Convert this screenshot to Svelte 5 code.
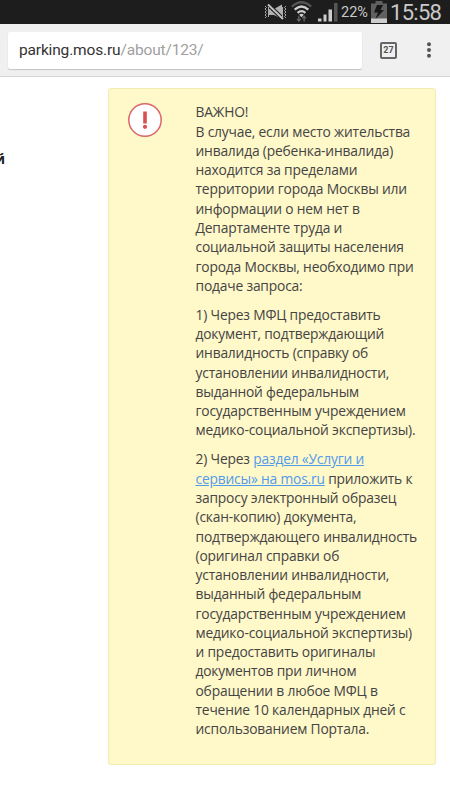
<script lang="ts">
	const clock = "15:58";
	const battery = 22;
	const tabCount = 27;
	const host = "parking.mos.ru";
	const path = "/about/123/";
</script>

<div class="screen">
	<header class="status-bar">
		<svg class="mute" viewBox="0 0 23 18" width="23" height="18">
			<path d="M5 6h5l8-4.500V16l-8-4H5z" fill="#b0b0b0" />
			<path d="M4 1.500l15 14.500" stroke="#1d1d1d" stroke-width="4" />
			<path d="M4 1.500l15 14.500" stroke="#c4c4c4" stroke-width="1.800" />
			<path
				d="M1 3l1.500 1.500L1 6l1.500 1.500L1 9l1.500 1.500L1 12l1.500 1.500L1 15M4.500 4v10M18.500 4v10M22 3l-1.500 1.500L22 6l-1.500 1.500L22 9l-1.500 1.500L22 12l-1.500 1.500L22 15"
				fill="none"
				stroke="#aaa"
				stroke-width="1"
			/>
		</svg>
		<svg class="wifi" viewBox="0 0 20 20" width="21" height="21">
			<path d="M.8 5.300Q10-3 19.200 5.300" fill="none" stroke="#555" stroke-width="2.200" />
			<path d="M3.500 8.300Q10 2.300 16.500 8.300M6.300 11.300Q10 8 13.700 11.300" fill="none" stroke="#cfcfcf" stroke-width="2.200" />
			<path d="M7.800 13Q10 11.300 12.200 13L10 15.500z" fill="#cfcfcf" />
			<path d="M7.500 14v5M5.700 17l1.800 2 1.800-2M12.500 19.500v-5M10.700 16.500l1.800-2 1.800 2" fill="none" stroke="#686868" stroke-width="1.200" />
		</svg>
		<svg class="signal" viewBox="0 0 21 20" width="21" height="20">
			<path d="M0 16.500h3.500V19.500H0zM5.500 12.500h3v7h-3zM10.500 7.500H14v12h-3.500z" fill="#cdcdcd" />
			<path d="M16 1h3.500v18.500H16z" fill="#565656" />
		</svg>
		<span class="percent">{battery}%</span>
		<svg class="battery" viewBox="0 0 16 22" width="16" height="22">
			<path d="M4.500 0h7v2.500H16V22H0V2.500h4.500z" fill="#606060" />
			<path d="M0 17.500h16V22H0z" fill="#cecece" />
			<path d="M6 4h6L9.500 9H13L4.500 18 7 11.500H3z" fill="#171717" />
		</svg>
		<span class="clock">{clock}</span>
	</header>

	<nav class="toolbar">
		<div class="address">{host}<span>{path}</span></div>
		<div class="tabs">{tabCount}</div>
		<svg class="menu" viewBox="0 0 6 16" width="6" height="16">
			<circle cx="3" cy="2.300" r="2" />
			<circle cx="3" cy="8" r="2" />
			<circle cx="3" cy="13.700" r="2" />
		</svg>
	</nav>

	<main>
		<aside><b>й</b></aside>
		<section class="notice">
			<svg class="alert" viewBox="0 0 34 34" width="34" height="34">
				<circle cx="17" cy="17" r="16.200" fill="#fff" stroke="#db6669" stroke-width="1.500" />
				<path d="M15.200 8.500h3.600v12h-3.600z" fill="#d94f52" />
				<circle cx="17" cy="23.800" r="2.100" fill="#d94f52" />
			</svg>
			<div class="text">
				<p>
					ВАЖНО!<br />
					В случае, если место жительства<br />
					инвалида (ребенка-инвалида)<br />
					находится за пределами<br />
					территории города Москвы или<br />
					информации о нем нет в<br />
					Департаменте труда и<br />
					социальной защиты населения<br />
					города Москвы, необходимо при<br />
					подаче запроса:
				</p>
				<p>
					1) Через МФЦ предоставить<br />
					документ, подтверждающий<br />
					инвалидность (справку об<br />
					установлении инвалидности,<br />
					выданной федеральным<br />
					государственным учреждением<br />
					медико-социальной экспертизы).
				</p>
				<p>
					2) Через <a href="#services">раздел «Услуги и<br />
					сервисы» на mos.ru</a> приложить к<br />
					запросу электронный образец<br />
					(скан-копию) документа,<br />
					подтверждающего инвалидность<br />
					(оригинал справки об<br />
					установлении инвалидности,<br />
					выданный федеральным<br />
					государственным учреждением<br />
					медико-социальной экспертизы)<br />
					и предоставить оригиналы<br />
					документов при личном<br />
					обращении в любое МФЦ в<br />
					течение 10 календарных дней с<br />
					использованием Портала.
				</p>
			</div>
		</section>
	</main>
</div>

<style>
	:global(body) {
		background: #fff;
	}
	.screen {
		width: 450px;
		height: 800px;
		overflow: hidden;
		display: flex;
		flex-direction: column;
		font-family: "Open Sans", "Noto Sans", sans-serif;
	}
	.status-bar {
		height: 24px;
		flex-shrink: 0;
		box-sizing: border-box;
		padding: 0 8px 1px 0;
		display: flex;
		align-items: center;
		justify-content: flex-end;
		background: #1d1d1d;
		color: #c9c9c9;
		font-family: Roboto, sans-serif;
		white-space: nowrap;
	}
	.status-bar svg {
		flex-shrink: 0;
	}
	.mute {
		margin-right: 4px;
	}
	.wifi {
		margin-right: 6px;
	}
	.signal {
		margin-right: 2px;
	}
	.percent {
		width: 28px;
		font-size: 14.5px;
		line-height: 21px;
		padding-top: 2px;
		margin-right: 2px;
	}
	.battery {
		margin-right: 3px;
	}
	.clock {
		width: 52px;
		font-size: 22px;
		letter-spacing: -0.7px;
		line-height: 23px;
		padding-top: 1px;
	}
	.toolbar {
		height: 53px;
		flex-shrink: 0;
		box-sizing: border-box;
		padding: 0 18px 0 8px;
		display: flex;
		align-items: center;
		background: #f0f0f0;
		border-bottom: 1px solid #d4d4d4;
		font-family: Roboto, sans-serif;
	}
	.address {
		width: 354px;
		height: 37px;
		box-sizing: border-box;
		padding-left: 11px;
		line-height: 37px;
		background: #fff;
		border-radius: 2px;
		box-shadow: 0 1px 1px #c4c4c4;
		color: #333;
		font-size: 15.5px;
		letter-spacing: -0.16px;
	}
	.address span {
		color: #a0a0a0;
	}
	.tabs {
		width: 17px;
		height: 17px;
		box-sizing: border-box;
		margin-left: 18px;
		border: 2px solid #666;
		border-radius: 2px;
		color: #555;
		font-size: 9px;
		font-weight: 700;
		line-height: 13px;
		text-align: center;
	}
	.menu {
		margin-left: auto;
		fill: #555;
	}
	main {
		flex: 1;
		padding-top: 11px;
		display: flex;
		align-items: flex-start;
	}
	aside {
		width: 108px;
		flex-shrink: 0;
		padding-top: 61px;
		color: #222;
		font-size: 14px;
		line-height: 19px;
	}
	aside b {
		display: block;
		margin-left: -5px;
	}
	.notice {
		width: 328px;
		height: 677px;
		box-sizing: border-box;
		padding: 14px 0 0 19px;
		display: flex;
		align-items: flex-start;
		background: #fff8c9;
		border: 1px solid #f3ebb0;
		border-radius: 3px;
	}
	.alert {
		flex-shrink: 0;
		margin-right: 33.5px;
	}
	.text {
		margin-top: -0.7px;
		color: #444;
		font-size: 13.8px;
		letter-spacing: -0.18px;
		line-height: 19.28px;
		white-space: nowrap;
	}
	p {
		margin: 0 0 9.65px;
	}
	a {
		color: #529bea;
		text-decoration: underline;
	}
</style>
